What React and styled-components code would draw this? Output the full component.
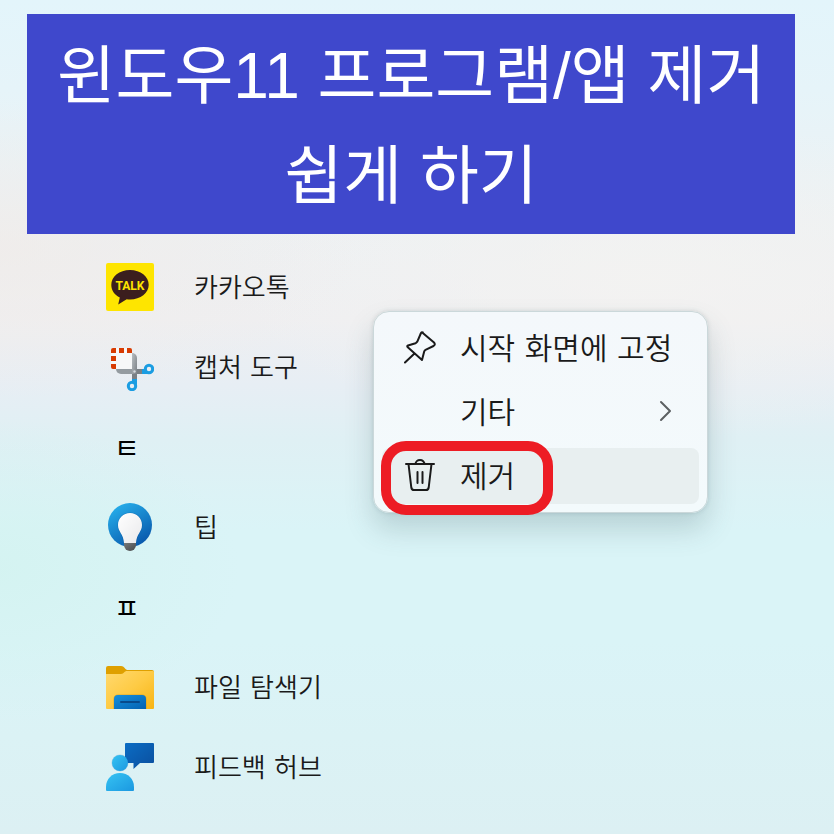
import React from "react";
import styled, { createGlobalStyle } from "styled-components";

const GlobalStyle = createGlobalStyle`
    * {
        box-sizing: border-box;
    }

    body {
        margin: 0;
        font-family: "DejaVu Sans", "Noto Sans CJK KR", sans-serif;
        color: #1a1a1a;
    }
`

const Page = styled.main`
    position: relative;
    display: flow-root;
    min-height: 100vh;
    padding-bottom: 27px;
    background:
        radial-gradient(ellipse 240px 150px at 0 570px, rgba(210, 243, 239, 0.7), rgba(210, 243, 239, 0)),
        radial-gradient(ellipse 360px 150px at 0 250px, rgba(240, 235, 232, 0.7), rgba(240, 235, 232, 0)),
        radial-gradient(ellipse 420px 160px at 650px 280px, rgba(244, 243, 241, 0.8), rgba(244, 243, 241, 0)),
        linear-gradient(#e3f5fb 0, #e6f4f9 90px, #edf1f3 220px, #efeff1 320px, #e7eef4 385px, #dff0f4 440px, #daf4f7 530px, #daf4f7 640px, #dcf0f3 834px);
`

const Banner = styled.h1`
    margin: 14px 39px 0 27px;
    padding: 12px 24px 8px;
    background-color: #3f48cc;
    color: #ffffff;
    font-family: "Liberation Sans", "Noto Sans CJK KR", sans-serif;
    font-size: 64px;
    font-weight: 400;
    line-height: 100px;
    text-align: center;
    word-break: keep-all;
`

const AppList = styled.ul`
    margin: 13px 0 0;
    padding: 0 106px;
    list-style: none;
`

const AppButton = styled.button`
    display: flex;
    align-items: center;
    gap: 40px;
    width: 100%;
    height: 80px;
    padding: 0;
    border: none;
    background: none;
    color: inherit;
    font-family: inherit;
    font-size: 26px;
    font-weight: 350;
    text-align: left;
    cursor: pointer;
`

const AppName = styled.span`
    padding-bottom: 4px;
`

const Letter = styled.h2`
    display: flex;
    align-items: center;
    height: 80px;
    margin: 0;
    padding-left: 8px;
    color: #000000;
    font-size: 28px;
    font-weight: 400;
`

const AppIcon = styled.svg`
    flex: none;
    width: 48px;
    height: 48px;
`

const ContextMenu = styled.div`
    position: absolute;
    top: 311px;
    left: 373px;
    display: flex;
    flex-direction: column;
    gap: 8px;
    width: 335px;
    padding: 8px;
    border: 1px solid #cbd8da;
    border-radius: 16px;
    background: linear-gradient(#f4f8fb, #f3fafc);
    background-clip: padding-box;
    box-shadow: 0 16px 28px rgba(60, 90, 95, 0.22), 0 0 4px rgba(60, 90, 95, 0.18);
`

const MenuItem = styled.button`
    display: flex;
    align-items: center;
    gap: 24px;
    height: 56px;
    padding: 0 22px 2px;
    border: none;
    border-radius: 8px;
    background-color: ${props => props.$active ? "#e8eff0" : "transparent"};
    color: inherit;
    font-family: inherit;
    font-size: 30px;
    font-weight: 350;
    text-align: left;
    white-space: nowrap;
    cursor: pointer;
`

const MenuLabel = styled.span`
    flex: 1;
    padding-bottom: 2px;
`

const MenuIcon = styled.svg`
    flex: none;
    width: 32px;
    height: 34px;
    fill: none;
    stroke: #1a1a1a;
    stroke-width: 2;
    stroke-linecap: round;
    stroke-linejoin: round;
`

const Chevron = styled(MenuIcon)`
    width: 24px;
    stroke: #5c6062;
`

const RedMark = styled.div`
    position: absolute;
    top: 441px;
    left: 381px;
    width: 172px;
    height: 74px;
    border: 10px solid #ed1c24;
    border-radius: 25px;
    pointer-events: none;
`

const KakaoTalkIcon = () => (
    <AppIcon viewBox="0 0 48 48" aria-hidden="true">
        <rect width="48" height="48" rx="2" fill="#fee500" />
        <path d="M24 7C13.400 7 5.300 13.500 5.300 22c0 5.500 3.500 10 8.500 12.500L12.200 41.500l8.500-5.200c1.100.2 2.200.2 3.300.2 10.600 0 18.700-6.500 18.700-14.700S34.600 7 24 7z" fill="#3b1e1e" />
        <text x="24" y="26.500" textAnchor="middle" fontFamily="Roboto, sans-serif" fontSize="12" fontWeight="700" fill="#fee500">TALK</text>
    </AppIcon>
)

const SnippingIcon = () => (
    <AppIcon viewBox="0 0 48 48" aria-hidden="true">
        <defs>
            <linearGradient id="snipBlade" x1="0" x2="1" y1="0" y2="1">
                <stop offset="0" stopColor="#b9bec2" />
                <stop offset="1" stopColor="#747a7f" />
            </linearGradient>
        </defs>
        <path d="M6 5h17l3 3v18H10l-5-3V6z" fill="#f7f8f8" />
        <path d="M5 7a2 2 0 0 1 2-2h3v5H5zM13 5h5v5h-5zM21 5h3a2 2 0 0 1 2 2v3h-5zM5 13h5v5H5zM5 21h5v5H7a2 2 0 0 1-2-2z" fill="#d83b01" />
        <path d="M10 26h21v5H15a5 5 0 0 1-5-5z" fill="#949ba0" />
        <path d="M26 10a5 5 0 0 1 5 5v21h-5z" fill="url(#snipBlade)" />
        <path d="M26 31h5v6h-5zM31 26h6v5h-6z" fill="#7a8085" />
        <circle cx="28.500" cy="28.500" r="1.200" fill="#d6dadd" />
        <g fill="none" stroke="#1b9de2" strokeWidth="3">
            <circle cx="43" cy="26" r="3.700" />
            <circle cx="26" cy="43" r="3.700" />
        </g>
        <path d="M26 36h5v6l-3-2-2-1zM36 26h3l2 3 2 2h-7z" fill="#1b9de2" />
    </AppIcon>
)

const TipsIcon = () => (
    <AppIcon viewBox="0 0 48 48" aria-hidden="true">
        <defs>
            <linearGradient id="tipsDisc" x1="0.2" x2="0.8" y1="0" y2="1">
                <stop offset="0" stopColor="#27b0ec" />
                <stop offset="1" stopColor="#0753a8" />
            </linearGradient>
            <linearGradient id="tipsBulb" x1="0" x2="1" y1="0" y2="1">
                <stop offset="0" stopColor="#ffffff" />
                <stop offset="1" stopColor="#e9e9eb" />
            </linearGradient>
            <linearGradient id="tipsBase" x1="0" x2="1" y1="0" y2="1">
                <stop offset="0" stopColor="#77797b" />
                <stop offset="1" stopColor="#47494b" />
            </linearGradient>
        </defs>
        <circle cx="24" cy="22" r="22" fill="url(#tipsDisc)" />
        <path d="M24 9.500c-7 0-12.500 5.500-12.500 12.400 0 7 5 8.600 6 18.100h13c1-9.500 6-11.100 6-18.100C36.500 15 31 9.500 24 9.500z" fill="#074f96" opacity="0.350" />
        <path d="M24 10c-6.700 0-12 5.200-12 11.900C12 29 17.500 30.500 18 40h12c.5-9.500 6-11 6-18.100C36 15.200 30.700 10 24 10z" fill="url(#tipsBulb)" />
        <path d="M18 40h12v2a6 6 0 0 1-12 0z" fill="url(#tipsBase)" />
    </AppIcon>
)

const ExplorerIcon = () => (
    <AppIcon viewBox="0 0 48 48" aria-hidden="true">
        <defs>
            <linearGradient id="folderFront" x1="0" x2="1" y1="0" y2="1">
                <stop offset="0" stopColor="#ffd96f" />
                <stop offset="0.5" stopColor="#fecb45" />
                <stop offset="1" stopColor="#f8b414" />
            </linearGradient>
            <linearGradient id="folderTray" x1="0" x2="1" y1="0" y2="1">
                <stop offset="0" stopColor="#1590dc" />
                <stop offset="1" stopColor="#0561b1" />
            </linearGradient>
        </defs>
        <path d="M2 3h13c2 0 3 1 4.500 3l1.500 1h25a2 2 0 0 1 2 2v5H0V5a2 2 0 0 1 2-2z" fill="#dfa000" />
        <path d="M0 11h15c1.500 0 2.500-1 3.500-2 .8-.8 1.800-1 2.500-1h26a1 1 0 0 1 1 1v36a1 1 0 0 1-1 1H1a1 1 0 0 1-1-1z" fill="url(#folderFront)" />
        <path d="M7.500 46V36a4.500 4.500 0 0 1 4.500-4.500h24a4.500 4.500 0 0 1 4.500 4.500v10z" fill="#b98a1c" opacity="0.500" />
        <path d="M8 46V36a4 4 0 0 1 4-4h24a4 4 0 0 1 4 4v10z" fill="url(#folderTray)" />
        <rect x="14" y="38" width="20" height="2" rx="1" fill="#084a8b" />
    </AppIcon>
)

const FeedbackIcon = () => (
    <AppIcon viewBox="0 0 48 48" aria-hidden="true">
        <defs>
            <linearGradient id="feedbackUser" x1="0" x2="1" y1="0" y2="1">
                <stop offset="0" stopColor="#36c3f3" />
                <stop offset="1" stopColor="#1b98e0" />
            </linearGradient>
            <linearGradient id="feedbackBubble" x1="0" x2="1" y1="0" y2="1">
                <stop offset="0" stopColor="#0b6cc4" />
                <stop offset="1" stopColor="#0b4f9e" />
            </linearGradient>
        </defs>
        <path d="M20 0h27a1 1 0 0 1 1 1v18a1 1 0 0 1-1 1H34l-6.500 6V20H19V1a1 1 0 0 1 1-1z" fill="url(#feedbackBubble)" />
        <circle cx="14" cy="20" r="8.500" fill="#0b4f9e" opacity="0.200" />
        <circle cx="14" cy="20" r="8" fill="url(#feedbackUser)" />
        <path d="M14 30c8 0 14 6 14 14v3a1 1 0 0 1-1 1H1a1 1 0 0 1-1-1v-3c0-8 6-14 14-14z" fill="url(#feedbackUser)" />
    </AppIcon>
)

const PinIcon = () => (
    <MenuIcon viewBox="0 0 32 34" aria-hidden="true">
        <path d="M10.500 23.500L1 32.500M18.200 2.500L30 12.500Q31.800 14.500 29.500 16L21.500 19.800Q20.500 20.300 20.200 21.500L18 30L3.500 17Q2.800 16 4 15.500L11.500 13.200Q12.600 12.800 13.200 11.800L16.800 3.500Q17.200 1.800 18.800 2.500z" />
    </MenuIcon>
)

const TrashIcon = () => (
    <MenuIcon viewBox="0 0 32 34" aria-hidden="true">
        <path d="M2 6h28M11.500 6a4.500 4 0 0 1 9 0M4.500 6l2.800 23.500Q7.700 32 10 32h12q2.300 0 2.700-2.500L27.500 6M13.500 14v11M18.500 14v11" />
    </MenuIcon>
)

const rows = [
    { name: "카카오톡", icon: <KakaoTalkIcon /> },
    { name: "캡처 도구", icon: <SnippingIcon /> },
    { letter: "ㅌ" },
    { name: "팁", icon: <TipsIcon /> },
    { letter: "ㅍ" },
    { name: "파일 탐색기", icon: <ExplorerIcon /> },
    { name: "피드백 허브", icon: <FeedbackIcon /> },
]

const App = () => (
    <Page>
        <GlobalStyle />
        <Banner>윈도우11 프로그램/앱 제거 쉽게 하기</Banner>
        <AppList>
            {rows.map(row => (
                <li key={row.letter || row.name}>
                    {row.letter
                        ? <Letter>{row.letter}</Letter>
                        : <AppButton type="button">{row.icon}<AppName>{row.name}</AppName></AppButton>
                    }
                </li>
            ))}
        </AppList>
        <ContextMenu role="menu">
            <MenuItem type="button" role="menuitem">
                <PinIcon />
                <MenuLabel>시작 화면에 고정</MenuLabel>
            </MenuItem>
            <MenuItem type="button" role="menuitem" aria-haspopup="menu">
                <MenuIcon aria-hidden="true" />
                <MenuLabel>기타</MenuLabel>
                <Chevron viewBox="0 0 24 34" aria-hidden="true">
                    <path d="M8 8l9 9-9 9" />
                </Chevron>
            </MenuItem>
            <MenuItem type="button" role="menuitem" $active>
                <TrashIcon />
                <MenuLabel>제거</MenuLabel>
            </MenuItem>
        </ContextMenu>
        <RedMark />
    </Page>
)

export default App;
